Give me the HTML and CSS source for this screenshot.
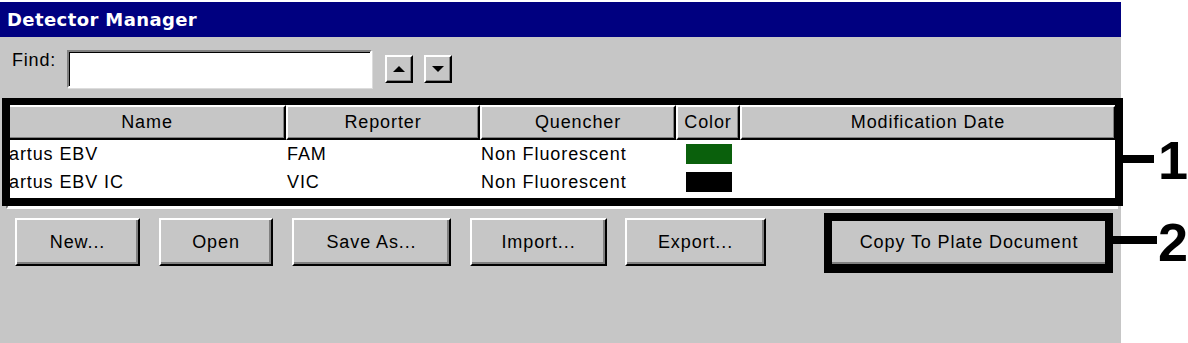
FILE: index.html
```html
<!DOCTYPE html>
<html>
<head>
<meta charset="utf-8">
<title>Detector Manager</title>
<link rel="stylesheet" href="styles.css">
</head>
<body>
<div class="page">
  <div class="window">
    <div class="titlebar">Detector Manager</div>
    <div class="findrow">
      <label class="findlabel">Find:</label>
      <div class="findinput"></div>
      <div class="arrowbtn"><span class="tri-up"></span></div>
      <div class="arrowbtn"><span class="tri-down"></span></div>
    </div>
    <div class="list">
      <div class="grid">
        <div class="hcell">Name</div>
        <div class="hcell">Reporter</div>
        <div class="hcell">Quencher</div>
        <div class="hcell">Color</div>
        <div class="hcell">Modification Date</div>

        <div class="cell">artus EBV</div>
        <div class="cell">FAM</div>
        <div class="cell">Non Fluorescent</div>
        <div class="cell"><span class="swatch green"></span></div>
        <div class="cell"></div>

        <div class="cell">artus EBV IC</div>
        <div class="cell">VIC</div>
        <div class="cell">Non Fluorescent</div>
        <div class="cell"><span class="swatch black"></span></div>
        <div class="cell"></div>
      </div>
    </div>
    <div class="buttons">
      <div class="btn w-new">New...</div>
      <div class="btn w-open">Open</div>
      <div class="btn w-save">Save As...</div>
      <div class="btn w-import">Import...</div>
      <div class="btn w-export">Export...</div>
      <div class="btn w-copy">Copy To Plate Document</div>
    </div>
  </div>

  <div class="callout box1"></div>
  <div class="leader lead1"></div>
  <div class="num num1">1</div>

  <div class="callout box2"></div>
  <div class="leader lead2"></div>
  <div class="num num2">2</div>
</div>
</body>
</html>
```

FILE: styles.css
```css
* { box-sizing: border-box; }

html, body {
  margin: 0;
  padding: 0;
  background: #ffffff;
}

.page {
  position: relative;
  width: 1188px;
  height: 343px;
  padding-top: 2px;
  overflow: hidden;
  font-family: "Liberation Sans", Arial, sans-serif;
  font-size: 18px;
  letter-spacing: 0.9px;
  color: #000;
}

.window {
  width: 1121px;
  height: 341px;
  background: #c6c6c6;
}

.titlebar {
  height: 35px;
  line-height: 35px;
  background: #000080;
  color: #fff;
  font-family: "DejaVu Sans", sans-serif;
  font-weight: bold;
  font-size: 18px;
  letter-spacing: 0.4px;
  padding-left: 7px;
}

.findrow {
  display: flex;
  align-items: flex-start;
  padding-top: 13px;
  height: 51px;
}

.findlabel {
  width: 67px;
  padding-left: 12px;
  line-height: 20px;
  margin-top: 0px;
  letter-spacing: 0.8px;
}

.findinput {
  width: 305px;
  height: 38px;
  background: #fff;
  border-top: 2px solid #808080;
  border-left: 2px solid #808080;
  border-bottom: 2px solid #fff;
  border-right: 2px solid #fff;
  box-shadow: inset 1px 1px 0 #000, 1px 1px 0 #dcdcdc;
}

.arrowbtn {
  width: 28px;
  height: 28px;
  margin-top: 5px;
  margin-left: 11px;
  background: #c6c6c6;
  border-top: 2px solid #fff;
  border-left: 2px solid #fff;
  border-right: 2px solid #000;
  border-bottom: 2px solid #000;
  box-shadow: inset -1px -1px 0 #808080;
  display: flex;
  align-items: center;
  justify-content: center;
}
.findinput + .arrowbtn { margin-left: 13px; }

.tri-up, .tri-down {
  width: 0;
  height: 0;
  border-left: 6px solid transparent;
  border-right: 6px solid transparent;
}
.tri-up { border-bottom: 6px solid #000; }
.tri-down { border-top: 6px solid #000; }

.list {
  margin-top: 15px;
  margin-left: 6px;
  width: 1112px;
  height: 106px;
  background: #fff;
  border-top: 2px solid #808080;
  border-left: 2px solid #808080;
  border-bottom: 2px solid #fff;
  border-right: 2px solid #fff;
}

.grid {
  display: grid;
  grid-template-columns: 278px 194px 196px 64px 376px;
  grid-template-rows: 35px 28px 28px;
}

.hcell {
  background: #c6c6c6;
  border-top: 2px solid #fff;
  border-left: 2px solid #fff;
  border-right: 2px solid #000;
  border-bottom: 2px solid #000;
  box-shadow: inset -1px -1px 0 #808080;
  text-align: center;
  line-height: 31px;
  white-space: nowrap;
  overflow: hidden;
}

.cell {
  line-height: 28px;
  padding-left: 1px;
  white-space: nowrap;
  display: flex;
  align-items: flex-start;
}

.swatch {
  display: block;
  width: 46px;
  height: 20px;
  margin-left: 9px;
  margin-top: 4px;
}
.swatch.green { background: #0a600c; }
.swatch.black { background: #000; }

.buttons {
  display: flex;
  margin-top: 9px;
  padding-left: 15px;
}

.btn {
  height: 48px;
  line-height: 44px;
  text-align: center;
  background: #c6c6c6;
  border-top: 2px solid #fff;
  border-left: 2px solid #fff;
  border-right: 2px solid #000;
  border-bottom: 2px solid #000;
  box-shadow: inset -2px -2px 0 #808080;
  white-space: nowrap;
}
.w-new { width: 125px; }
.w-open { width: 114px; margin-left: 19px; }
.w-save { width: 159px; margin-left: 19px; }
.w-import { width: 137px; margin-left: 19px; }
.w-export { width: 141px; margin-left: 18px; }
.w-copy { width: 282px; margin-left: 62px; }

/* annotation overlays */
.callout {
  position: absolute;
  border: 8px solid #000;
}
.box1 {
  left: 2px;
  top: 98px;
  width: 1121px;
  height: 108px;
  border-top-width: 7px;
}
.box2 {
  left: 824px;
  top: 213px;
  width: 289px;
  height: 60px;
}

.leader {
  position: absolute;
  background: #000;
  height: 8px;
}
.lead1 { left: 1123px; top: 155px; width: 31px; }
.lead2 { left: 1113px; top: 236px; width: 44px; }

.num {
  position: absolute;
  font-family: "Liberation Sans", Arial, sans-serif;
  font-weight: bold;
  font-size: 54px;
  line-height: 54px;
  letter-spacing: 0;
}
.num1 { left: 1158px; top: 133px; }
.num2 { left: 1158px; top: 215px; }
```
